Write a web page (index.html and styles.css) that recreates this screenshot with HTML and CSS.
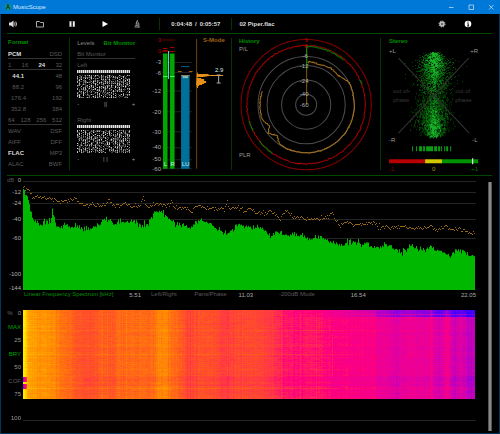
FILE: index.html
```html
<!DOCTYPE html>
<html lang="en">
<head>
<meta charset="utf-8">
<title>MusicScope</title>
<link rel="stylesheet" href="styles.css">
</head>
<body>
<header class="titlebar">
  <svg class="app-icon" viewBox="0 0 8 8"><circle cx="4" cy="4" r="3.5" fill="#0a8f83"/><path d="M3.5 1.5v2L2 6.5M4.5 1.5v2L6 6.5M3 4.5h2" stroke="#123c3a" fill="none"/></svg>
  <h1>MusicScope</h1>
  <div class="window-controls">
    <button aria-label="Minimize"><svg viewBox="0 0 6 6"><path d="M1 3.5h4.500"/></svg></button>
    <button aria-label="Maximize"><svg viewBox="0 0 6 6"><path d="M1 1h4.500v4.500h-4.500z"/></svg></button>
    <button aria-label="Close"><svg viewBox="0 0 6 6"><path d="M1 1l4.500 4.500M5.500 1L1 5.500"/></svg></button>
  </div>
</header>
<main>
  <nav class="toolbar">
    <button aria-label="Volume"><svg viewBox="0 0 10 10"><path fill="#ddd" d="M1 3.500h2l2.500-2v7L3 6.500H1z"/><path d="M6.500 3.500q1 1.500 0 3M7.700 2.500q1.800 2.500 0 5" stroke="#bbb" fill="none"/></svg></button>
    <button aria-label="Open"><svg viewBox="0 0 10 10"><path d="M1.500 8V2.500h3l.8 1h3.200V8z" stroke="#aaa" fill="none"/></svg></button>
    <button aria-label="Pause"><svg viewBox="0 0 10 10"><path fill="#eee" d="M2.500 2.200h2v5.600h-2zM5.800 2.200h2v5.600h-2z"/></svg></button>
    <button aria-label="Play"><svg viewBox="0 0 10 10"><path fill="#fff" d="M2.500 2l5.500 3-5.500 3z"/></svg></button>
    <button aria-label="Analyse"><svg viewBox="0 0 10 10"><path d="M5.500 1L4 5h2M5.500 2.500Q8 5 6.500 7.500M2.500 8h5.500M3 6.300h3" stroke="#aaa" stroke-width=".9" fill="none"/></svg></button>
    <div class="time"><b>0:04:48</b><span>/</span><b>0:05:57</b></div>
    <div class="track">02 Piper.flac</div>
    <button aria-label="Settings"><svg viewBox="0 0 10 10"><circle cx="5" cy="5" r="2.700" fill="#bbb"/><circle cx="5" cy="5" r="3" stroke="#ccc" stroke-dasharray="1.178" fill="none"/><circle cx="5" cy="5" r="1" fill="#555"/></svg></button>
    <button aria-label="Information"><svg viewBox="0 0 10 10"><circle cx="5" cy="5" r="3.300" fill="#fff"/><path d="M5 2.500v1.200M4.500 4.600H5.200v2.400M4.200 7h2" stroke="#000" fill="none"/></svg></button>
  </nav>

  <section class="panels">
    <div class="panel format">
      <h2>Format</h2>
      <div class="row ruled"><button class="on">PCM</button><button>DSD</button></div>
      <div class="row ruled"><button>1</button><button>16</button><button class="on">24</button><button>32</button></div>
      <div class="row rates"><button class="on">44.1</button><button>48</button></div>
      <div class="row rates"><button>88.2</button><button>96</button></div>
      <div class="row rates"><button>176.4</button><button>192</button></div>
      <div class="row rates"><button>352.8</button><button>384</button></div>
      <div class="row ruled"><button>64</button><button>128</button><button>256</button><button>512</button></div>
      <div class="row"><button>WAV</button><button>DSF</button></div>
      <div class="row"><button>AIFF</button><button>DFF</button></div>
      <div class="row"><button class="on">FLAC</button><button>MP3</button></div>
      <div class="row"><button>ALAC</button><button>BWF</button></div>
    </div>

    <div class="panel levels">
      <div class="tabs"><button>Levels</button><button class="active">Bit Monitor</button></div>
      <div class="row ruled"><span>Bit Monitor</span></div>
      <div class="row"><span>Left</span></div>
      <canvas class="bits" width="53" height="28"></canvas>
      <div class="scale"><span>-</span><span>||</span><span>+</span></div>
      <div class="row"><span>Right</span></div>
      <canvas class="bits" width="53" height="28"></canvas>
      <div class="scale"><span>-</span><span>| |</span><span>+</span></div>
    </div>

    <div class="panel">
      <svg class="chart" viewBox="148 34 84 141">
        <path d="M162 40h13M162 51.500h13" stroke="#600"/>
        <path d="M162 62.500h30M162 72.500h30M162 91h30M162 111.500h30M162 131.500h30M162 147.500h30M162 159.500h30M162 168.500h30" stroke="#222"/>
        <path fill="#00a800" d="M163 53.500h4.500v115h-4.500zM170 53.500h4.500v115h-4.500z"/>
        <path d="M163 48.500h4.500M163 50.500h4.500M170 47.500h4.500M170 51.500h4.500" stroke="#a00"/>
        <path d="M163 76.500h4.500M170 76.500h4.500" stroke="#3f5"/>
        <path d="M168.500 51v28" stroke="#5dd"/>
        <path fill="#007099" d="M181 75h8.500v93.500H181z"/>
        <path d="M182.500 77h5.500" stroke="#8bb" stroke-width="2"/>
        <path d="M181 66.500h8.500" stroke="#075a80"/>
        <path d="M178 71.500h3.500M189 71.500h3.500" stroke="#a86400"/>
        <path d="M181 75.500h8.500" stroke="#9a8c60"/>
        <path d="M196.500 39v129.500" stroke="#69430a"/>
        <path fill="#e89018" d="M197 72l1 2h10l1 1h14v1h-14l-6 1h-6l1 1h3v1h3v2h2v2h-2v1h-2v1h-3v1h-1v2h-1l-1-4z"/>
        <path d="M218.500 75v8M216.500 75h4M216.500 83h4" stroke="#aaa"/>
        <g class="ticks end"><text class="red" x="161" y="42">3</text><text class="red" x="161" y="53">0</text><text x="161" y="64">-3</text><text x="161" y="75">-6</text><text x="161" y="93">-12</text><text x="161" y="114">-20</text><text x="161" y="134">-30</text><text x="161" y="149">-40</text><text x="161" y="161">-50</text><text x="161" y="171">-60</text></g>
        <g class="caps mid"><text x="165.500" y="166">L</text><text x="172.500" y="166">R</text><text x="185.500" y="166">LU</text><text x="219" y="72">2.9</text></g>
        <text class="bold amber" x="203" y="42">S-Mode</text>
      </svg>
    </div>

    <div class="panel">
      <svg class="chart" viewBox="232 34 148 141">
        <g fill="none" transform="translate(306 104.500)">
          <circle r="65" stroke="#800"/><circle r="48" stroke="#4c4c4c"/><circle r="39" stroke="#4c4c4c"/><circle r="24.500" stroke="#4c4c4c"/><circle r="10.500" stroke="#4c4c4c"/>
          <path id="peak-red" stroke="#a80000"/><path id="peak-green" stroke="#007800"/><path id="loudness" stroke="#a8701c"/>
          <path d="M.5 0v-59" stroke="#8d5a14"/><path d="M.5-35v-24" stroke="#008a00"/>
        </g>
        <g class="ticks mid"><text class="red" x="306" y="42">3</text><text class="red" x="306" y="48">0</text><text x="305" y="58">-6</text><text x="304" y="68">-12</text><text x="304" y="83">-24</text><text x="304" y="96">-40</text><text x="304" y="107">-60</text></g>
        <text class="bold green" x="239" y="43">History</text>
        <text class="light" x="239" y="51">P/L</text><text class="light" x="239" y="157">PLR</text>
      </svg>
    </div>

    <div class="panel">
      <svg class="chart" viewBox="380 34 111 141">
        <path id="cloud-dim" stroke="#064006"/><path id="cloud-mid" stroke="#0a7512"/><path id="cloud-hot" stroke="#18b028"/>
        <path d="M397.500 58l70.500 75M467.500 58L397.500 133" stroke="#333"/>
        <path fill="#b80000" d="M388 159h36v4h-36z"/><path fill="#d0c800" d="M424 159h17v4h-17z"/><path fill="#009500" d="M441 159h36v4h-36z"/>
        <path d="M471.500 158v6" stroke="#fff"/>
        <path id="phase" stroke="#0a9a14"/>
        <text class="bold green" x="388" y="43">Stereo</text>
        <text class="light" x="388" y="53">+L</text><text class="light" x="469" y="53">+R</text><text class="light" x="388" y="142">-R</text><text class="light" x="471" y="142">-L</text>
        <g class="faint"><text x="392" y="93">out of</text><text x="392" y="102">phase</text><text x="454" y="93">out of</text><text x="454" y="102">phase</text></g>
        <text x="388" y="171" fill="#900">-1</text><text x="431" y="171" fill="#aaa000">0</text><text x="470" y="171" fill="#070">+1</text>
      </svg>
    </div>
  </section>

  <section class="scope">
    <div class="views">
      <svg class="axis" viewBox="0 0 16 114">
        <text class="dim" x="0" y="6">dB</text>
        <g class="ticks end"><text x="14" y="6">0</text><text x="14" y="18">-12</text><text x="14" y="29">-24</text><text x="14" y="45">-40</text><text x="14" y="64">-60</text><text x="14" y="100">-100</text><text x="14" y="114">-144</text></g>
      </svg>
      <svg class="spectrum" viewBox="23 175 453 114" preserveAspectRatio="none">
        <path d="M23 180.500h453M23 191.500h453M23 202.500h453M23 218.500h453M23 237.500h453" stroke="#242424"/>
        <path id="area" fill="#00b800"/><path id="maxima" stroke="#9a6a14"/>
      </svg>
      <div class="legend">
        <span class="name">Linear Frequency Spectrum [kHz]</span><span class="freq">5.51</span><button>Left/Right</button><button>Pans/Phase</button><span class="freq">11.03</span><button>-200dB Mode</button><span class="freq">16.54</span><span class="freq">22.05</span>
      </div>
      <div class="percent">
        <span class="zero"><i>%</i>0</span><button class="lit">MAX</button><span>25</span><button class="lit">BRY</button><span>50</span><button>COF</button><span>75</span>
      </div>
      <canvas class="spectrogram" width="453" height="89"></canvas>
      <span class="hundred">100</span><hr>
    </div>
    <div class="scrollbar"></div>
  </section>
</main>
<script src="scope.js"></script>
</body>
</html>
```
FILE: styles.css
```css
* { box-sizing: border-box; }
body {
  margin: 0;
  min-height: 100vh;
  display: flex;
  flex-direction: column;
  background: #000;
  color: #5a5a5a;
  font: 6px/8px "Liberation Sans", sans-serif;
}
button {
  margin: 0;
  padding: 0;
  border: 0;
  background: none;
  color: inherit;
  font: inherit;
}
svg, canvas { display: block; }
h1, h2 { margin: 0; font-size: 6px; }

.titlebar {
  display: flex;
  align-items: center;
  height: 14px;
  padding: 0 6px 0 4px;
  background: #0078d7;
  color: #d4e8fa;
}
.titlebar h1 { margin-left: 1px; font-weight: 400; }
.app-icon { width: 8px; height: 8px; }
.window-controls { display: flex; gap: 14px; margin-left: auto; }
.window-controls svg { width: 6px; height: 6px; fill: none; stroke: #d4e8fa; stroke-width: 0.7; }

main {
  flex: 1;
  display: flex;
  flex-direction: column;
  padding: 0 7px 2px 6px;
  border: solid #00375f;
  border-width: 0 1px 1px;
}
.toolbar {
  display: grid;
  grid-template-columns: 27fr 32fr 33fr 32fr 28fr 72fr 204fr 26fr 30fr;
  align-items: center;
  height: 20px;
  border-bottom: 1px solid #004a00;
}
.toolbar button { padding-left: 1px; }
.toolbar svg { width: 10px; height: 10px; }
.time, .track {
  height: 12px;
  padding-left: 11px;
  border-left: 1px solid #003800;
  line-height: 12px;
  color: #ddd;
  font-weight: 700;
}
.time { display: flex; gap: 3px; }
.track { padding-left: 7px; }

.panels {
  display: grid;
  grid-template-columns: 63fr 78fr 84fr 148fr 111fr;
  border-bottom: 1px solid #004a00;
}
.panel { position: relative; }
.panel:nth-child(1)::after, .panel:nth-child(3)::after, .panel:nth-child(4)::after {
  content: "";
  position: absolute;
  right: 0;
  top: 4px;
  bottom: 5px;
  width: 1px;
  background: #003800;
}
.format { padding: 4px 8px 6px 1px; }
.format h2, .tabs { height: 10px; line-height: 8px; color: #009000; }
.row { display: flex; justify-content: space-between; height: 11px; line-height: 12px; }
.ruled { border-bottom: 1px solid #333; }
.rates { padding-left: 3px; }
.rates button:first-child { width: 13px; text-align: right; }
.on { color: #ddd; font-weight: 700; }
.levels { padding: 4px 13px 6px 7px; }
.tabs { display: flex; justify-content: space-between; color: #888; }
.tabs .active { color: #009000; font-weight: 700; }
.bits { width: 53px; height: 28px; }
.scale { display: flex; justify-content: space-between; height: 16px; line-height: 12px; color: #999; }

.chart { width: 100%; height: auto; fill: none; }
text { font-size: 6px; }
.ticks { fill: #b0b0b0; }
.caps { fill: #d8e8e8; }
.end { text-anchor: end; }
.mid { text-anchor: middle; }
.red { fill: #b80000; }
.bold { font-weight: 700; }
.green { fill: #009000; }
.amber { fill: #a06410; }
.light { fill: #999; }
.faint { fill: #383838; }
.dim { fill: #555; }

.scope { flex: 1; display: flex; }
.views {
  flex: 1;
  display: grid;
  grid-template-columns: 16px 1fr;
  grid-template-rows: 114px 19px 91px auto;
  align-content: start;
  padding-right: 12px;
}
.axis { width: 16px; height: 114px; }
.spectrum { width: 100%; height: 114px; fill: none; }
.legend {
  grid-column: 2;
  display: grid;
  grid-template-columns: 107fr 22fr 44fr 45fr 41fr 73fr 112fr 8fr;
  padding-left: 1px;
  white-space: nowrap;
}
.legend button { text-align: left; align-self: start; }
.name { color: #009000; }
.freq { color: #aaa; padding-top: 1px; }
.percent {
  display: flex;
  flex-direction: column;
  align-items: flex-end;
  justify-content: space-between;
  height: 89px;
  padding-right: 2px;
}
.percent span, .hundred { color: #999; }
.percent i { margin-right: 5px; font-style: normal; color: #666; }
.percent .lit { color: #00a000; }
.spectrogram { width: 100%; height: 89px; margin-top: 1px; }
.hundred { margin-top: 14px; padding-right: 2px; text-align: right; }
hr { width: 100%; margin: 20px 0 0; border: 0; border-top: 1px solid #242424; }
.scrollbar {
  width: 4px;
  margin-top: 6px;
  border: solid #555;
  border-width: 0 1px;
  background: #888;
}
```
FILE: scope.js
```js
let seed = 7;
function rnd() {
  seed = (seed * 1664525 + 1013904223) % 4294967296;
  return seed / 4294967296;
}
function gauss() { return rnd() + rnd() + rnd() + rnd() - 2; }
function lerp(points, x) {
  for (let i = 2; i < points.length; i += 2) {
    if (x <= points[i]) {
      const t = (x - points[i - 2]) / (points[i] - points[i - 2]);
      return points[i - 1] + t * (points[i + 1] - points[i - 1]);
    }
  }
  return points[points.length - 1];
}
function setPath(id, d) { document.getElementById(id).setAttribute("d", d); }

// Spectrum: x in thirds of a pixel, y in thirds below the top rule.
const level = [68,38,72,42,74,58,80,57,86,80,92,110,100,130,115,145,127,148,130,126,134,148,140,122,143,145,146,118,150,146,156,103,161,120,165,142,170,150,200,148,210,157,228,148,240,158,270,156,300,145,310,130,325,128,340,148,360,135,380,140,400,135,415,150,430,143,440,145,455,120,475,103,490,112,505,128,520,138,535,150,550,145,570,162,590,138,603,130,625,142,650,160,670,168,700,160,715,146,750,155,790,160,810,182,820,170,845,170,860,182,870,175,900,180,940,192,960,180,990,195,1025,212,1040,198,1090,200,1130,218,1155,205,1205,230,1235,208,1260,222,1295,215,1350,238,1370,225,1390,225,1410,245,1428,232];
let area = "M23 289";
for (let x = 23; x < 475; x += 1) {
  const y = 175 + (lerp(level, x * 3) + (x > 29 ? gauss() * 8 : 0)) / 3;
  area += `L${x} ${y.toFixed(1)}H${x + 1}`;
}
setPath("area", area + "V289z");

const maxLevel = [68,25,75,40,90,50,95,65,115,58,130,68,160,68,175,80,200,75,225,65,240,85,300,90,318,85,323,64,330,82,345,90,370,82,390,92,420,88,428,64,434,86,445,95,465,84,490,90,508,86,513,68,518,92,530,98,550,92,570,105,590,92,630,97,650,100,675,96,680,68,686,100,710,95,730,105,750,98,770,115,810,105,840,130,855,100,880,125,920,128,950,128,985,122,995,105,1003,128,1020,148,1040,138,1060,148,1120,138,1135,152,1180,155,1210,152,1250,158,1295,152,1310,164,1335,150,1355,162,1380,158,1400,168,1428,172];
let maxima = "";
for (let x = 23; x < 475; x += 1) {
  const y = Math.round(174.5 + (lerp(maxLevel, x * 3) + gauss() * 6) / 3);
  maxima += `M${x} ${y}.5h1`;
}
setPath("maxima", maxima);

// History rings: radius by angle, clockwise from the top.
function ring(radius, from, to, noise) {
  let d = "";
  for (let a = from; a <= to; a += 1) {
    const r = radius(a) + gauss() * noise, t = a * Math.PI / 180;
    d += `${d ? "L" : "M"}${(r * Math.sin(t)).toFixed(1)} ${(-r * Math.cos(t)).toFixed(1)}`;
  }
  return d;
}
const loud = [0,43,20,42,35,44,48,43,62,48,90,48,150,48,205,48,215,47,223,42,233,47,240,42,250,46,288,46];
setPath("loudness", ring(a => lerp(loud, a), 2, 287, 0.5));
setPath("peak-red", ring(() => 59, 0, 360, 0.5));
setPath("peak-green", ring(() => 58, 1, 40, 0.6) + ring(() => 59, 65, 70, 0.5) + ring(() => 59, 215, 232, 0.5) + ring(() => 59, 244, 254, 0.5));

// Stereo cloud: two vertical lobes that meet in the middle.
const cloud = ["", "", ""];
for (let i = 0; i < 4200; i += 1) {
  const y = rnd() < 0.25 ? 54 + rnd() * 82 : rnd() < 0.5 ? 68 + gauss() * 24 : 120 + gauss() * 24;
  if (y < 52 || y > 137) continue;
  const edge = Math.min(y - 52, 137 - y);
  const spread = Math.min(13, 5 + edge);
  const g = gauss();
  const x = 432.5 + g * spread * (rnd() > 0.8 ? 1.5 : 0.9);
  const heat = Math.abs(g) + edge / 55 + rnd() * 1.1;
  cloud[heat < 0.75 ? 2 : heat < 1.3 ? 1 : 0] += `M${Math.round(x)} ${Math.round(y) + 0.5}h1`;
}
["cloud-dim", "cloud-mid", "cloud-hot"].forEach((id, i) => setPath(id, cloud[i]));
let phase = "M411.5 146v5M415.5 146v5";
for (let x = 418; x < 450; x += 1) if (rnd() > Math.abs(x - 433) / 30) phase += `M${x}.5 146v5`;
setPath("phase", phase);

// Bit activity: a solid header row above scattered bits.
document.querySelectorAll(".bits").forEach(canvas => {
  const c = canvas.getContext("2d");
  for (let x = 0; x < 53; x += 2) {
    c.fillStyle = "#e4e4e4";
    c.fillRect(x, 0, 1, 3);
    c.fillStyle = "#777";
    c.fillRect(x + 1, 0, 1, 3);
    for (let y = 5; y < 28; y += 1) {
      const v = Math.round(50 + rnd() * 170);
      c.fillStyle = `rgb(${v},${v},${v})`;
      if (rnd() > 0.3) c.fillRect(x, y, 1, 1);
      c.fillStyle = "#3a3a3a";
      if (rnd() > 0.6) c.fillRect(x + 1, y, 1, 1);
    }
  }
});

// Spectrogram.
const shades = [[48,0,255],[110,0,240],[180,0,200],[232,0,155],[255,0,125],[255,50,75],[255,80,40],[255,115,15],[255,150,0],[255,190,0],[255,235,0]];
const heatByX = [68,1,74,0.98,80,0.88,90,0.82,160,0.77,180,0.7,240,0.61,270,0.59,300,0.65,345,0.62,350,0.67,460,0.68,475,0.76,500,0.74,515,0.69,550,0.62,560,0.54,600,0.6,650,0.59,680,0.51,690,0.56,750,0.58,780,0.56,810,0.53,840,0.46,880,0.43,960,0.44,975,0.4,1050,0.38,1120,0.38,1130,0.33,1150,0.33,1190,0.29,1230,0.34,1270,0.3,1295,0.34,1315,0.26,1340,0.36,1360,0.25,1385,0.29,1410,0.21,1428,0.21];
const gram = document.querySelector(".spectrogram").getContext("2d");
const columns = Array.from({ length: 453 }, () => gauss() * 0.025);
for (let y = 0; y < 89; y += 1) {
  const row = gauss() * 0.015 + ([20, 44, 78].includes(y) ? 0.05 : 0);
  let smooth = 0;
  for (let x = 0; x < 452; x += 1) {
    smooth = smooth * 0.6 + gauss() * 0.02;
    let v = lerp(heatByX, (x + 23) * 3) + columns[x] + smooth + row * (x < 330 ? 1 : 0.5);
    if (y < 7 && x > 260) v -= Math.min(0.2, (x - 260) / 800) * (y === 4 ? 0.5 : 1);
    if (y > 65 && y < 76 && x > 60) v -= 0.025;
    if (x < 4 && ((y > 66 && y < 72) || (y > 73 && y < 79))) v = 0.2 + x * 0.1;
    if ((x === 204 || x === 309) && y > 23 && y < 66 && y % 2) v += 0.13;
    v = Math.max(0, Math.min(0.999, v)) * 10;
    const k = Math.floor(v), f = v - k;
    gram.fillStyle = `rgb(${shades[k].map((s, i) => Math.round(s + f * (shades[k + 1][i] - s)))})`;
    gram.fillRect(x, y, 1, 1);
  }
}
```
